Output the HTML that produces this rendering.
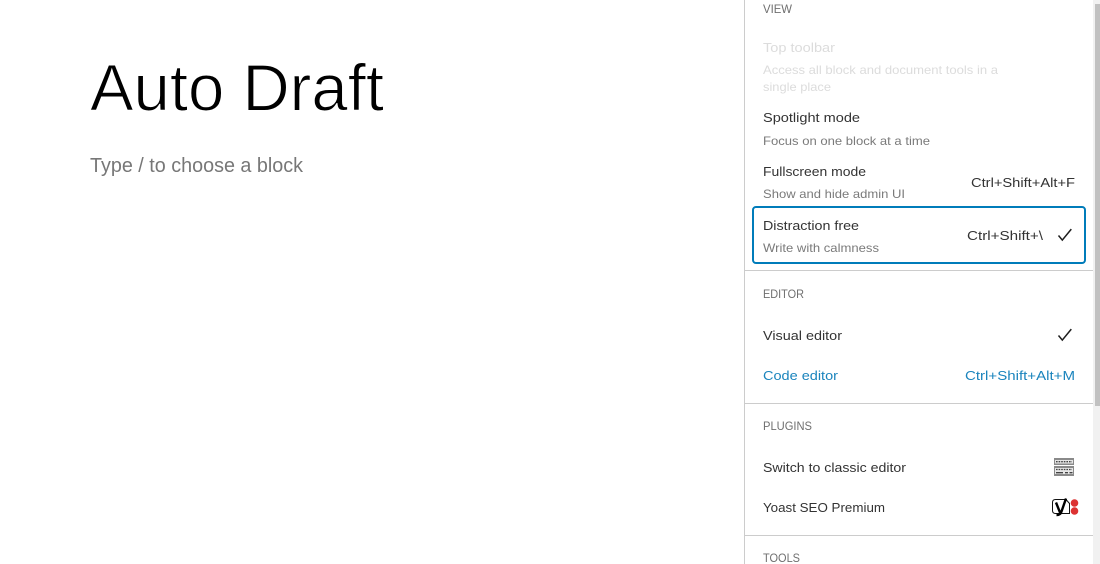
<!DOCTYPE html>
<html lang="en">
<head>
<meta charset="utf-8">
<title>Auto Draft</title>
<style>
html,body{margin:0;padding:0;width:1100px;height:564px;overflow:hidden;background:#fff}
svg{display:block}
text{font-family:"Liberation Sans",sans-serif;white-space:pre}
.i{font-size:13px;fill:#333}
.d{font-size:12px;fill:#7a7a7a}
.h{font-size:12px;fill:#6f6f6f}
.off{fill:#dcdcdc}
.b{fill:#1a84bd}
</style>
</head>
<body>
<svg width="1100" height="564" viewBox="0 0 1100 564" xmlns="http://www.w3.org/2000/svg">
<rect width="1100" height="564" fill="#fff"/>

<text x="90" y="110.500" font-size="66" fill="#000" stroke="#fff" stroke-width="1.100" textLength="294" lengthAdjust="spacingAndGlyphs">Auto Draft</text>
<text x="90" y="172" font-size="20" fill="#777" textLength="213" lengthAdjust="spacingAndGlyphs">Type / to choose a block</text>

<rect x="744" y="0" width="1" height="564" fill="#ccc"/>
<rect x="1093" y="0" width="7" height="564" fill="#f1f1f1"/>
<rect x="1095" y="4" width="5" height="402" fill="#c1c1c1"/>

<text class="h" x="763" y="13" textLength="29" lengthAdjust="spacingAndGlyphs">VIEW</text>

<text class="i off" x="763" y="52" textLength="72" lengthAdjust="spacingAndGlyphs">Top toolbar</text>
<text class="d off" x="763" y="74" textLength="235" lengthAdjust="spacingAndGlyphs">Access all block and document tools in a</text>
<text class="d off" x="763" y="91" textLength="68" lengthAdjust="spacingAndGlyphs">single place</text>

<text class="i" x="763" y="122" textLength="97" lengthAdjust="spacingAndGlyphs">Spotlight mode</text>
<text class="d" x="763" y="145" textLength="167" lengthAdjust="spacingAndGlyphs">Focus on one block at a time</text>

<text class="i" x="763" y="176" textLength="103" lengthAdjust="spacingAndGlyphs">Fullscreen mode</text>
<text class="d" x="763" y="198" textLength="142" lengthAdjust="spacingAndGlyphs">Show and hide admin UI</text>
<text class="i" x="971" y="187" textLength="104" lengthAdjust="spacingAndGlyphs">Ctrl+Shift+Alt+F</text>

<rect x="753" y="207" width="332" height="56" rx="3" fill="none" stroke="#007cba" stroke-width="2"/>
<text class="i" x="763" y="230" textLength="96" lengthAdjust="spacingAndGlyphs">Distraction free</text>
<text class="d" x="763" y="252" textLength="116" lengthAdjust="spacingAndGlyphs">Write with calmness</text>
<text class="i" x="967" y="240" textLength="76" lengthAdjust="spacingAndGlyphs">Ctrl+Shift+\</text>
<path d="M1058.500 235.500l3.800 4.600 9-11" fill="none" stroke="#1e1e1e" stroke-width="1.500"/>

<rect x="745" y="270" width="348" height="1" fill="#ccc"/>

<text class="h" x="763" y="298" textLength="41" lengthAdjust="spacingAndGlyphs">EDITOR</text>
<text class="i" x="763" y="340" textLength="79" lengthAdjust="spacingAndGlyphs">Visual editor</text>
<path d="M1058.500 335.500l3.800 4.600 9-11" fill="none" stroke="#1e1e1e" stroke-width="1.500"/>
<text class="i b" x="763" y="380" textLength="75" lengthAdjust="spacingAndGlyphs">Code editor</text>
<text class="i b" x="965" y="380" textLength="110" lengthAdjust="spacingAndGlyphs">Ctrl+Shift+Alt+M</text>

<rect x="745" y="403" width="348" height="1" fill="#ccc"/>

<text class="h" x="763" y="430" textLength="49" lengthAdjust="spacingAndGlyphs">PLUGINS</text>
<text class="i" x="763" y="472" textLength="143" lengthAdjust="spacingAndGlyphs">Switch to classic editor</text>
<rect x="1054" y="458" width="20" height="7" fill="#8a8a8a"/>
<rect x="1054" y="466" width="20" height="10" fill="#8a8a8a"/>
<rect x="1055" y="460" width="18" height="3.500" fill="#e6e6e6"/>
<rect x="1055" y="468" width="18" height="6" fill="#e6e6e6"/>
<path d="M1056 461.700h16M1056 469.500h16" stroke="#444" stroke-width="1.300" stroke-dasharray="1.600 1" fill="none"/>
<path d="M1056 472.700h7M1065 472.700h3M1069.500 472.700h3" stroke="#444" stroke-width="1.300" fill="none"/>

<text class="i" x="763" y="512" textLength="122" lengthAdjust="spacingAndGlyphs">Yoast SEO Premium</text>
<path d="M1055.500 499.500h10.500l3.500 4v10h-14q-3 0-3-3v-8q0-3 3-3z" fill="none" stroke="#111" stroke-width="1"/>
<path d="M1056 502.500l4 10M1066 498.500l-4.500 13q-1 3.500-5 3.500" fill="none" stroke="#000" stroke-width="2.400"/>
<circle cx="1074.500" cy="503" r="3.800" fill="#dc3232"/>
<circle cx="1074.500" cy="511" r="3.800" fill="#dc3232"/>

<rect x="745" y="535" width="348" height="1" fill="#ccc"/>
<text class="h" x="763" y="562" textLength="37" lengthAdjust="spacingAndGlyphs">TOOLS</text>
</svg>
</body>
</html>
